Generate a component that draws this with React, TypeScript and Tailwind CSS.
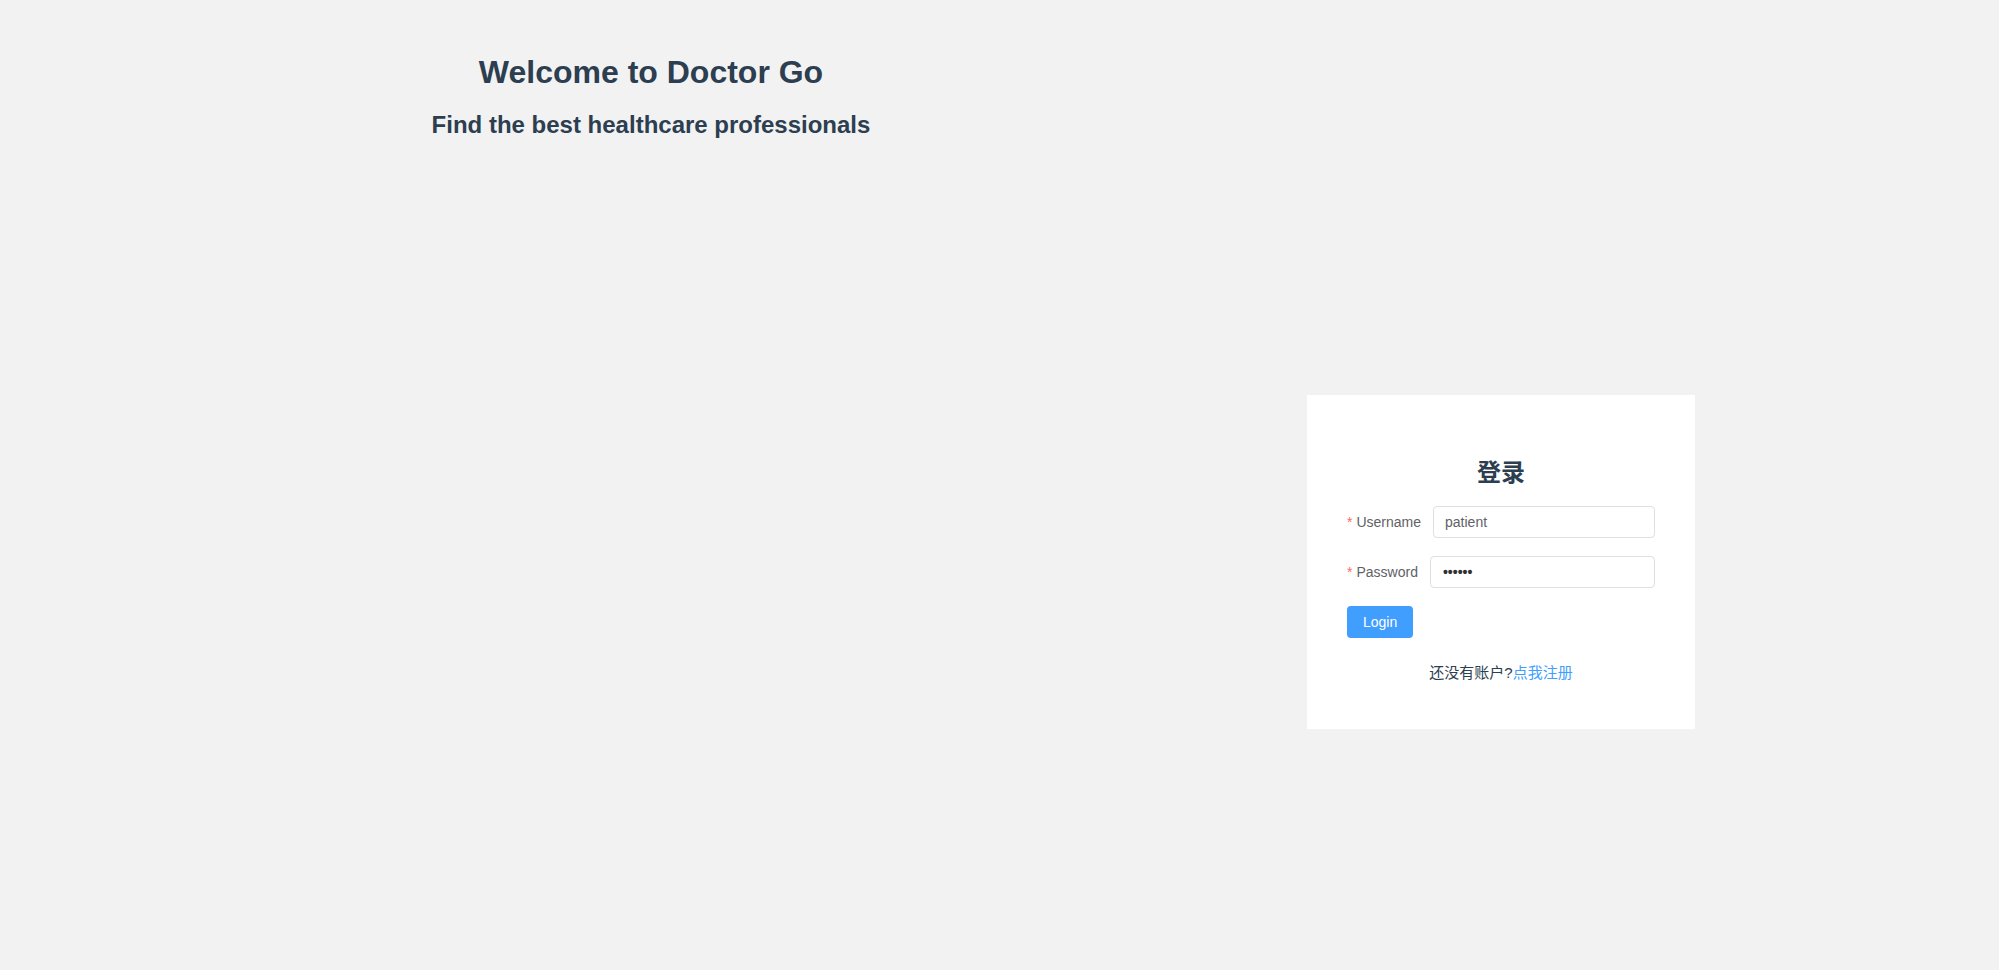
export default function App() {
  const font = { fontFamily: '"Liberation Sans", Arial, "Noto Sans CJK SC", sans-serif' };
  return (
    <div className="w-[1999px] h-[970px] bg-[#f2f2f2] flex flex-row text-[#2c3e50]" style={font}>
      <div className="w-[1302px] flex flex-col items-center pt-[54px]">
        <h1 className="text-[32px] font-bold leading-[37px] m-0">Welcome to Doctor Go</h1>
        <h2 className="text-[24px] font-bold leading-[28px] mt-[20px]">Find the best healthcare professionals</h2>
      </div>
      <div className="ml-[5px] mt-[395px] w-[388px] h-[334px] bg-white px-[40px] pt-[40px] flex flex-col">
        <div className="mt-[21px] h-[34px] leading-[34px] text-center text-[24px] font-bold text-[#2c3e50]">登录</div>
        <div className="mt-[16px] flex items-center h-[32px]">
          <label className="text-[14px] text-[#606266] pr-[12px] whitespace-nowrap">
            <span className="text-[#f56c6c] mr-[4px]">*</span>Username
          </label>
          <div className="flex-1 h-[32px] border border-[#dcdfe6] rounded-[4px] px-[11px] flex items-center text-[14px] text-[#606266]">patient</div>
        </div>
        <div className="mt-[18px] flex items-center h-[32px]">
          <label className="text-[14px] text-[#606266] pr-[12px] whitespace-nowrap">
            <span className="text-[#f56c6c] mr-[4px]">*</span>Password
          </label>
          <div className="flex-1 h-[32px] border border-[#dcdfe6] rounded-[4px] px-[12px] flex items-center text-[14px] text-[#303133]">
            <span className="text-[14px] font-bold">••••••</span>
          </div>
        </div>
        <div className="mt-[18px] h-[32px] flex">
          <button className="h-[32px] px-[16px] bg-[#409eff] text-white text-[14px] rounded-[4px]">Login</button>
        </div>
        <div className="mt-[24px] text-center text-[15px] leading-[22px] text-[#2c3e50]">
          还没有账户?<span className="text-[#409eff]">点我注册</span>
        </div>
      </div>
    </div>
  );
}
